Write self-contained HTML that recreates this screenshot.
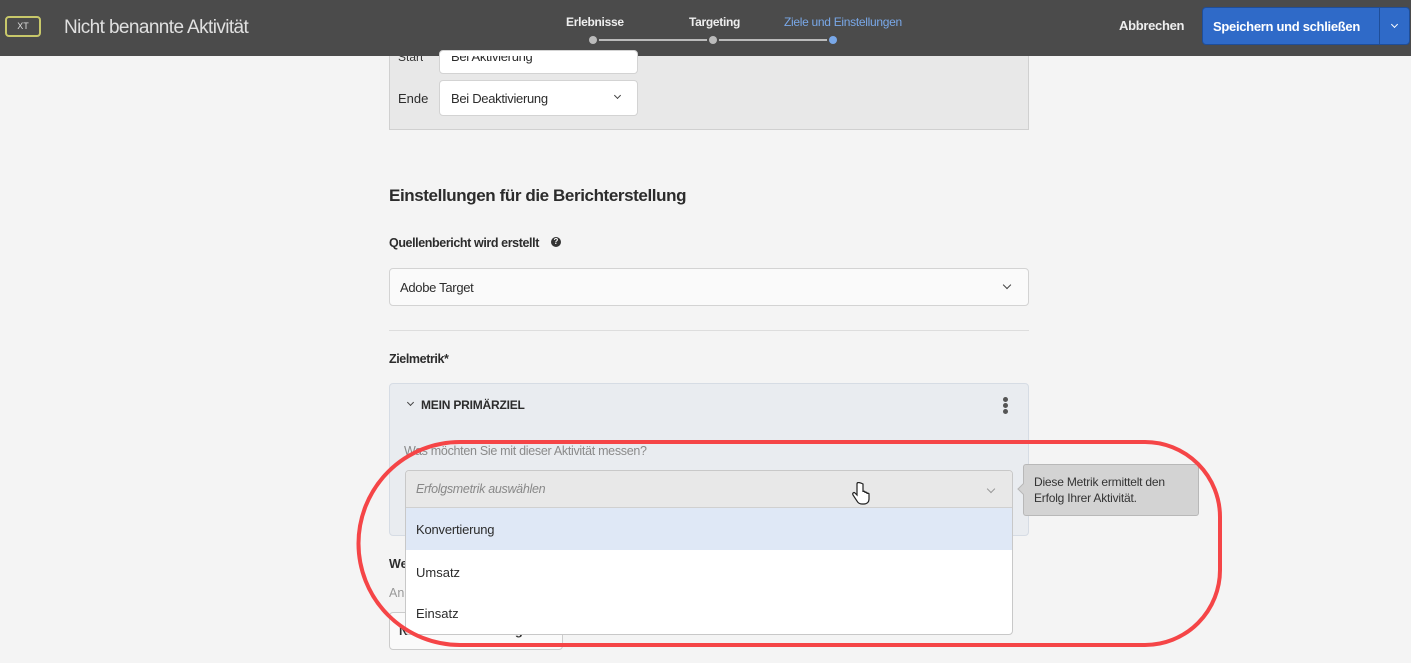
<!DOCTYPE html>
<html><head><meta charset="utf-8"><style>
*{box-sizing:border-box;margin:0;padding:0}
body{width:1411px;height:663px;overflow:hidden;background:#f4f4f4;font-family:"Liberation Sans",sans-serif;color:#2c2c2c;position:relative}
.abs{position:absolute}
.hdr{left:0;top:0;width:1411px;height:56px;background:#4b4b4b}
.sel{background:#fafafa;border:1px solid #d3d3d3;border-radius:4px}
.chev{width:7px;height:7px;border-right:1.6px solid #444;border-bottom:1.6px solid #444;transform:rotate(45deg)}
</style></head><body>
<div class="abs hdr"></div>
<div class="abs" style="left:5px;top:16px;width:36px;height:21px;border:2px solid #c8c86a;border-radius:4px;color:#ddd;font-size:9px;text-align:center;line-height:17px">XT</div>
<div class="abs" style="left:64px;top:17px;color:#e0e0e0;font-size:19px;letter-spacing:-0.6px">Nicht benannte Aktivität</div>
<div class="abs" style="left:566px;top:15px;color:#eee;font-size:12px;font-weight:bold;letter-spacing:-0.3px">Erlebnisse</div>
<div class="abs" style="left:689px;top:15px;color:#eee;font-size:12px;font-weight:bold;letter-spacing:-0.3px">Targeting</div>
<div class="abs" style="left:784px;top:15px;color:#79a8e8;font-size:12px;letter-spacing:-0.3px">Ziele und Einstellungen</div>
<div class="abs" style="left:593px;top:39px;width:240px;height:2px;background:#bbb"></div>
<div class="abs" style="left:589px;top:36px;width:8px;height:8px;border-radius:50%;background:#bbb;box-shadow:0 0 0 2px #4b4b4b"></div>
<div class="abs" style="left:709px;top:36px;width:8px;height:8px;border-radius:50%;background:#bbb;box-shadow:0 0 0 2px #4b4b4b"></div>
<div class="abs" style="left:829px;top:36px;width:8px;height:8px;border-radius:50%;background:#79a8e8;box-shadow:0 0 0 2px #4b4b4b"></div>
<div class="abs" style="left:1119px;top:18px;color:#eee;font-size:13px;font-weight:bold;letter-spacing:-0.3px">Abbrechen</div>
<div class="abs" style="left:1202px;top:7px;width:208px;height:38px;background:#2f6ac8;border-radius:4px;border:1px solid #1f4e99"></div>
<div class="abs" style="left:1379px;top:8px;width:1px;height:36px;background:#1f4e99"></div>
<div class="abs" style="left:1213px;top:19px;color:#fff;font-size:13px;font-weight:bold;letter-spacing:-0.3px">Speichern und schließen</div>
<div class="abs chev" style="left:1392px;top:22px;width:5px;height:5px;border-color:#fff"></div>

<div class="abs" style="left:389px;top:56px;width:640px;height:74px;background:#e8e8e8;border:1px solid #d0d0d0;border-top:none"></div>
<div class="abs" style="left:398px;top:56px;height:8px;overflow:hidden;font-size:12px;color:#333;line-height:2px">Start</div>
<div class="abs sel" style="left:439px;top:50px;width:199px;height:24px;background:#fff"></div>
<div class="abs" style="left:451px;top:56px;height:8px;overflow:hidden;font-size:13px;line-height:2px;letter-spacing:-0.3px">Bei Aktivierung</div>
<div class="abs" style="left:398px;top:91px;font-size:13px">Ende</div>
<div class="abs sel" style="left:439px;top:80px;width:199px;height:36px;background:#fff"></div>
<div class="abs" style="left:451px;top:91px;font-size:13px;letter-spacing:-0.3px">Bei Deaktivierung</div>
<div class="abs chev" style="left:615px;top:93px;width:5px;height:5px"></div>

<div class="abs" style="left:389px;top:186px;font-size:17px;font-weight:bold;letter-spacing:-0.4px;color:#2c2c2c">Einstellungen für die Berichterstellung</div>
<div class="abs" style="left:389px;top:236px;font-size:12.5px;font-weight:bold;letter-spacing:-0.4px">Quellenbericht wird erstellt</div>
<div class="abs" style="left:551px;top:237px;width:10px;height:10px;border-radius:50%;background:#333;color:#fff;font-size:8px;text-align:center;line-height:10px;font-weight:bold">?</div>
<div class="abs sel" style="left:389px;top:268px;width:640px;height:38px"></div>
<div class="abs" style="left:400px;top:280px;font-size:13px;letter-spacing:-0.3px">Adobe Target</div>
<div class="abs chev" style="left:1004px;top:282px;width:6px;height:6px"></div>
<div class="abs" style="left:389px;top:330px;width:640px;height:1px;background:#ddd"></div>
<div class="abs" style="left:389px;top:352px;font-size:12.5px;font-weight:bold;letter-spacing:-0.4px">Zielmetrik*</div>

<div class="abs" style="left:389px;top:383px;width:640px;height:153px;background:#e9ecf0;border:1px solid #d6dce4;border-radius:4px"></div>
<div class="abs chev" style="left:408px;top:400px;width:5px;height:5px"></div>
<div class="abs" style="left:421px;top:398px;font-size:12px;font-weight:bold;letter-spacing:-0.2px">MEIN PRIMÄRZIEL</div>
<div class="abs" style="left:1003px;top:397px;width:5px;height:5px;border-radius:50%;background:#555;box-shadow:0 6px 0 #555,0 12px 0 #555"></div>
<div class="abs" style="left:404px;top:444px;font-size:12.5px;color:#8a8a8a;letter-spacing:-0.3px">Was möchten Sie mit dieser Aktivität messen?</div>
<div class="abs" style="left:389px;top:557px;font-size:12.5px;font-weight:bold">We</div>
<div class="abs" style="left:389px;top:586px;font-size:12.5px;color:#999">An</div>
<div class="abs" style="left:389px;top:612px;width:174px;height:38px;background:#fafafa;border:1px solid #ccc;border-radius:4px;padding:10px 9px;font-size:13px;font-weight:bold;color:#333;white-space:nowrap;letter-spacing:-0.4px">Neue Metrik hinzufügen</div>

<div class="abs" style="left:405px;top:470px;width:608px;height:165px;background:#fff;border:1px solid #c8c8c8;border-radius:4px;overflow:hidden">
<div style="height:37px;background:#e8e8e8;border-bottom:1px solid #d0d0d0;padding:11px 10px;font-size:12.5px;font-style:italic;color:#888;letter-spacing:-0.3px">Erfolgsmetrik auswählen</div>
<div style="height:42px;background:#dfe8f6;padding:14px 10px;font-size:13px;letter-spacing:-0.2px">Konvertierung</div>
<div style="height:42px;padding:15px 10px;font-size:13px">Umsatz</div>
<div style="height:42px;padding:14px 10px;font-size:13px">Einsatz</div>
</div>
<div class="abs" style="left:988px;top:486px;width:6px;height:6px;transform:rotate(45deg);border-right:1.3px solid #999;border-bottom:1.3px solid #999"></div>
<div class="abs" style="left:1023px;top:464px;width:176px;height:52px;background:#d3d3d3;border:1px solid #b8b8b8;border-radius:3px;padding:9px 10px;font-size:12px;line-height:16px;color:#333;letter-spacing:-0.2px">Diese Metrik ermittelt den Erfolg Ihrer Aktivität.</div>
<div class="abs" style="left:1019px;top:485px;width:8px;height:8px;background:#d3d3d3;border-left:1px solid #b8b8b8;border-bottom:1px solid #b8b8b8;transform:rotate(45deg)"></div>
<svg class="abs" style="left:852px;top:482px" width="18" height="26" viewBox="0 0 18 26"><path d="M5 2v11l-2-2c-1-1-3 0-2 2l4 6c1 2 3 3 5 3h2c3 0 5-2 5-5v-5c0-1-2-1-2 0v-1c0-1-2-1-2 0v-1c0-1-2-1-2 0V2C7 0 5 0 5 2z" fill="#fff" stroke="#222" stroke-width="1.2"/></svg>

<svg class="abs" style="left:0;top:0" width="1411" height="663"><path d="M460 442 H1145 A75 75 0 0 1 1220 517 V570 A75 75 0 0 1 1145 645 H460 A97 97 0 0 1 460 442 Z" fill="none" stroke="#f54547" stroke-width="4"/></svg>
</body></html>
